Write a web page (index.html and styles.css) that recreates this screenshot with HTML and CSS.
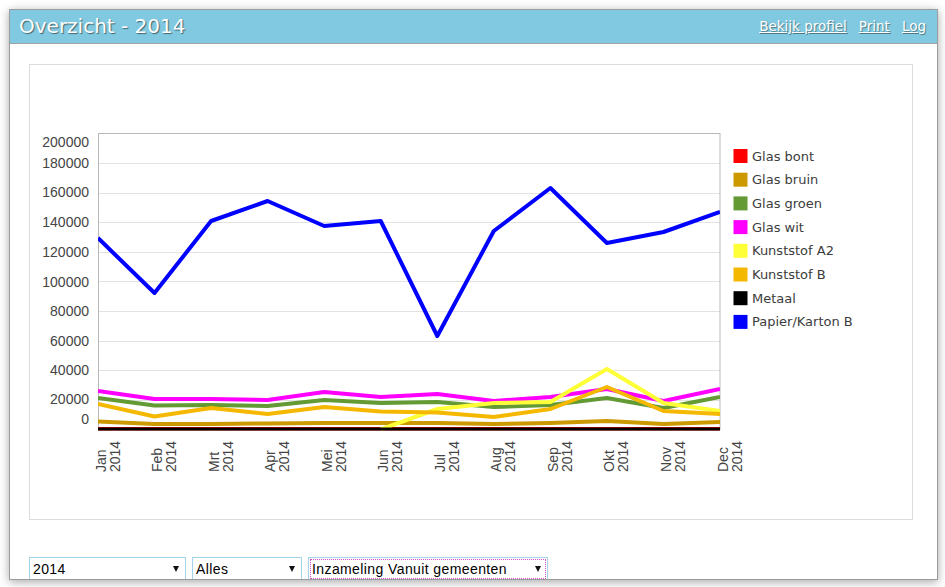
FILE: index.html
```html
<!DOCTYPE html>
<html lang="nl">
<head>
<meta charset="utf-8">
<title>Overzicht - 2014</title>
<link rel="stylesheet" href="styles.css">
</head>
<body>
<div class="window">
  <header class="topbar">
    <h1 class="title">Overzicht - 2014</h1>
    <nav class="links"><a href="#">Bekijk profiel</a><a href="#">Print</a><a href="#">Log</a></nav>
  </header>
  <main class="content">
    <div class="chart-box">
      <svg class="chart" width="882" height="454" viewBox="30 65 882 454" xmlns="http://www.w3.org/2000/svg">
        <defs>
          <clipPath id="plot"><rect x="98" y="133" width="622" height="297.5"/></clipPath>
        </defs>
        <g class="grid">
          <line x1="98" x2="720" y1="163.5" y2="163.5"/>
          <line x1="98" x2="720" y1="193.5" y2="193.5"/>
          <line x1="98" x2="720" y1="222.5" y2="222.5"/>
          <line x1="98" x2="720" y1="252.5" y2="252.5"/>
          <line x1="98" x2="720" y1="281.5" y2="281.5"/>
          <line x1="98" x2="720" y1="311.5" y2="311.5"/>
          <line x1="98" x2="720" y1="341.5" y2="341.5"/>
          <line x1="98" x2="720" y1="370.5" y2="370.5"/>
          <line x1="98" x2="720" y1="400.5" y2="400.5"/>
        </g>
        <rect class="frame" x="98.5" y="133.5" width="621.5" height="296"/>
        <g class="ylab">
          <text x="89" y="147">200000</text>
          <text x="89" y="167.5">180000</text>
          <text x="89" y="196.5">160000</text>
          <text x="89" y="226.5">140000</text>
          <text x="89" y="256.5">120000</text>
          <text x="89" y="286.5">100000</text>
          <text x="89" y="315.5">80000</text>
          <text x="89" y="346">60000</text>
          <text x="89" y="375">40000</text>
          <text x="89" y="404">20000</text>
          <text x="89" y="424">0</text>
        </g>
        <g clip-path="url(#plot)" class="series">
          <polyline stroke="#ff0000" points="98,429 154.5,429 211.1,429 267.6,429 324.2,429 380.7,429 437.3,429 493.8,429 550.4,429 606.9,429 663.5,429 720,429"/>
          <polyline stroke="#cc9900" points="98,421.5 154.5,424 211.1,424 267.6,423.5 324.2,423 380.7,423 437.3,423 493.8,424 550.4,423 606.9,421 663.5,424 720,422"/>
          <polyline stroke="#639a34" points="98,398 154.5,405.5 211.1,405 267.6,406 324.2,400 380.7,403 437.3,402 493.8,407 550.4,405 606.9,398 663.5,408 720,397"/>
          <polyline stroke="#ff00ff" points="98,391 154.5,399 211.1,399 267.6,400 324.2,392 380.7,397 437.3,394 493.8,401 550.4,397 606.9,389 663.5,401 720,389"/>
          <polyline stroke="#ffff38" points="380.7,429.5 437.3,409 493.8,403 550.4,402 606.9,369 663.5,403 720,411"/>
          <polyline stroke="#f5b800" points="98,404 154.5,416.5 211.1,408 267.6,414 324.2,407 380.7,411.5 437.3,412.5 493.8,417 550.4,409 606.9,387 663.5,411 720,414"/>
          <polyline stroke="#000000" stroke-width="3" points="98,429.5 720,429.5"/>
          <polyline stroke="#0000ff" points="98,238 154.5,293 211.1,221 267.6,201 324.2,226 380.7,221 437.3,336 493.8,231 550.4,188 606.9,243 663.5,232 720,212"/>
        </g>
        <g class="xlab">
          <text transform="translate(105.5,472) rotate(-90)">Jan</text><text transform="translate(119.5,472) rotate(-90)">2014</text>
          <text transform="translate(162,472) rotate(-90)">Feb</text><text transform="translate(176,472) rotate(-90)">2014</text>
          <text transform="translate(218.6,472) rotate(-90)">Mrt</text><text transform="translate(232.6,472) rotate(-90)">2014</text>
          <text transform="translate(275.1,472) rotate(-90)">Apr</text><text transform="translate(289.1,472) rotate(-90)">2014</text>
          <text transform="translate(331.7,472) rotate(-90)">Mei</text><text transform="translate(345.7,472) rotate(-90)">2014</text>
          <text transform="translate(388.2,472) rotate(-90)">Jun</text><text transform="translate(402.2,472) rotate(-90)">2014</text>
          <text transform="translate(444.8,472) rotate(-90)">Jul</text><text transform="translate(458.8,472) rotate(-90)">2014</text>
          <text transform="translate(501.3,472) rotate(-90)">Aug</text><text transform="translate(515.3,472) rotate(-90)">2014</text>
          <text transform="translate(557.9,472) rotate(-90)">Sep</text><text transform="translate(571.9,472) rotate(-90)">2014</text>
          <text transform="translate(614.4,472) rotate(-90)">Okt</text><text transform="translate(628.4,472) rotate(-90)">2014</text>
          <text transform="translate(671,472) rotate(-90)">Nov</text><text transform="translate(685,472) rotate(-90)">2014</text>
          <text transform="translate(727.5,472) rotate(-90)">Dec</text><text transform="translate(741.5,472) rotate(-90)">2014</text>
        </g>
        <g class="legend">
          <rect x="733.5" y="149" width="14" height="14" fill="#ff0000"/><text x="752" y="160.5">Glas bont</text>
          <rect x="733.5" y="172.7" width="14" height="14" fill="#cc9900"/><text x="752" y="184.2">Glas bruin</text>
          <rect x="733.5" y="196.4" width="14" height="14" fill="#639a34"/><text x="752" y="207.9">Glas groen</text>
          <rect x="733.5" y="220.1" width="14" height="14" fill="#ff00ff"/><text x="752" y="231.6">Glas wit</text>
          <rect x="733.5" y="243.8" width="14" height="14" fill="#ffff38"/><text x="752" y="255.3">Kunststof A2</text>
          <rect x="733.5" y="267.5" width="14" height="14" fill="#f5b800"/><text x="752" y="279">Kunststof B</text>
          <rect x="733.5" y="291.2" width="14" height="14" fill="#000000"/><text x="752" y="302.7">Metaal</text>
          <rect x="733.5" y="314.9" width="14" height="14" fill="#0000ff"/><text x="752" y="326.4">Papier/Karton B</text>
        </g>
      </svg>
    </div>
    <div class="filters">
      <div class="select s-year"><span>2014</span><i class="arrow"></i></div>
      <div class="select s-type"><span>Alles</span><i class="arrow"></i></div>
      <div class="select s-source"><span>Inzameling Vanuit gemeenten</span><i class="arrow"></i></div>
    </div>
  </main>
</div>
</body>
</html>
```

FILE: styles.css
```css
html, body {
  margin: 0;
  padding: 0;
  background: #fff;
}

body {
  width: 945px;
  height: 587px;
  overflow: hidden;
  font-family: "DejaVu Sans", Verdana, sans-serif;
}

.window {
  box-sizing: border-box;
  margin: 9px 0 0 9px;
  width: 929px;
  height: 571px;
  border: 1px solid #9c9c9c;
  background: #fff;
  overflow: hidden;
  box-shadow: 0 2px 9px rgba(0, 0, 0, 0.35);
}

.topbar {
  display: flex;
  justify-content: space-between;
  align-items: center;
  height: 33px;
  padding: 0 11px 0 9px;
  background: #80c9e1;
  border-bottom: 1px solid #a3a3a3;
}

.title {
  margin: 0;
  font-size: 20px;
  font-weight: normal;
  line-height: 33px;
  color: #fff;
  text-shadow: 1px 1px 1px rgba(0, 0, 0, 0.5);
}

.links {
  display: flex;
  gap: 12px;
}

.links a {
  font-size: 13.5px;
  line-height: 33px;
  color: #fff;
  text-decoration: underline;
  text-shadow: 1px 1px 1px rgba(0, 0, 0, 0.4);
}

.content {
  padding: 20px 0 0 19px;
}

.chart-box {
  box-sizing: border-box;
  width: 884px;
  height: 456px;
  border: 1px solid #dcdcdc;
}

.chart {
  display: block;
}

.grid line {
  stroke: #e2e2e2;
  stroke-width: 1;
}

.frame {
  fill: none;
  stroke: #b8b8b8;
  stroke-width: 1;
}

.ylab text {
  font-family: "Liberation Sans", Arial, sans-serif;
  font-size: 14px;
  fill: #444;
  text-anchor: end;
}

.xlab text {
  font-family: "Liberation Sans", Arial, sans-serif;
  font-size: 14px;
  fill: #444;
}

.series polyline {
  fill: none;
  stroke-width: 4;
  stroke-linejoin: round;
}

.legend text {
  font-family: "DejaVu Sans", Verdana, sans-serif;
  font-size: 13px;
  fill: #3c3c3c;
}

.filters {
  display: flex;
  gap: 6px;
  margin-top: 37px;
}

.select {
  box-sizing: border-box;
  display: flex;
  justify-content: space-between;
  align-items: center;
  height: 24px;
  padding: 0 6px 0 3px;
  border: 1px solid #a3d4ea;
  font-family: "Liberation Sans", Arial, sans-serif;
  font-size: 14px;
  letter-spacing: 0.4px;
  line-height: 21px;
  color: #000;
  background: #fff;
}

.s-year { width: 157px; }
.s-type { width: 110px; }
.s-source {
  width: 240px;
  outline: 1px dotted #d24fd2;
  outline-offset: -3px;
}

.arrow {
  width: 0;
  height: 0;
  border-left: 3.5px solid transparent;
  border-right: 3.5px solid transparent;
  border-top: 6px solid #111;
}
```
